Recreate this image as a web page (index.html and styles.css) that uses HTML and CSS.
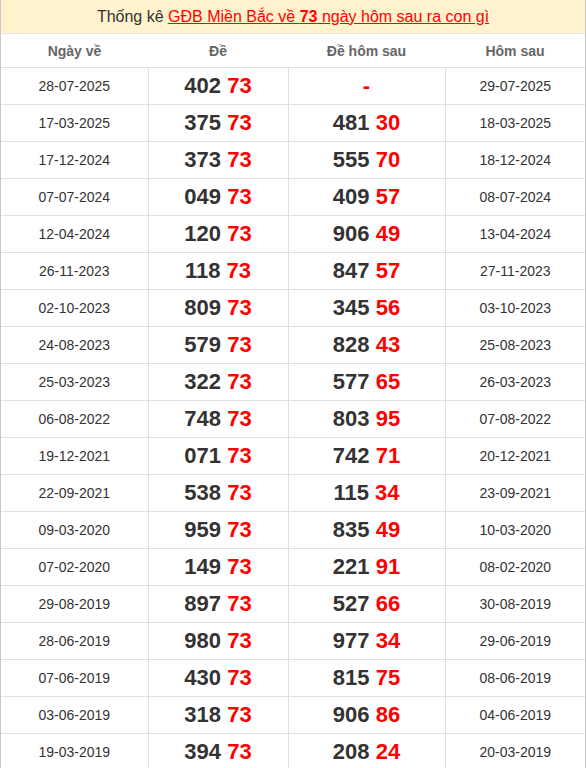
FILE: index.html
```html
<!DOCTYPE html>
<html lang="vi">
<head>
<meta charset="utf-8">
<title>Thống kê GĐB</title>
<link rel="stylesheet" href="styles.css">
</head>
<body>
<div class="wrap">
  <div class="caption">Thống kê <a href="#">GĐB Miền Bắc về <b>73</b> ngày hôm sau ra con gì</a></div>
  <table class="stat">
    <colgroup><col class="c1"><col class="c2"><col class="c3"><col class="c4"></colgroup>
    <thead>
      <tr><th>Ngày về</th><th>Đề</th><th>Đề hôm sau</th><th>Hôm sau</th></tr>
    </thead>
    <tbody>
      <tr><td>28-07-2025</td><td class="num">402 <span>73</span></td><td class="num"><span>-</span></td><td>29-07-2025</td></tr>
      <tr><td>17-03-2025</td><td class="num">375 <span>73</span></td><td class="num">481 <span>30</span></td><td>18-03-2025</td></tr>
      <tr><td>17-12-2024</td><td class="num">373 <span>73</span></td><td class="num">555 <span>70</span></td><td>18-12-2024</td></tr>
      <tr><td>07-07-2024</td><td class="num">049 <span>73</span></td><td class="num">409 <span>57</span></td><td>08-07-2024</td></tr>
      <tr><td>12-04-2024</td><td class="num">120 <span>73</span></td><td class="num">906 <span>49</span></td><td>13-04-2024</td></tr>
      <tr><td>26-11-2023</td><td class="num">118 <span>73</span></td><td class="num">847 <span>57</span></td><td>27-11-2023</td></tr>
      <tr><td>02-10-2023</td><td class="num">809 <span>73</span></td><td class="num">345 <span>56</span></td><td>03-10-2023</td></tr>
      <tr><td>24-08-2023</td><td class="num">579 <span>73</span></td><td class="num">828 <span>43</span></td><td>25-08-2023</td></tr>
      <tr><td>25-03-2023</td><td class="num">322 <span>73</span></td><td class="num">577 <span>65</span></td><td>26-03-2023</td></tr>
      <tr><td>06-08-2022</td><td class="num">748 <span>73</span></td><td class="num">803 <span>95</span></td><td>07-08-2022</td></tr>
      <tr><td>19-12-2021</td><td class="num">071 <span>73</span></td><td class="num">742 <span>71</span></td><td>20-12-2021</td></tr>
      <tr><td>22-09-2021</td><td class="num">538 <span>73</span></td><td class="num">115 <span>34</span></td><td>23-09-2021</td></tr>
      <tr><td>09-03-2020</td><td class="num">959 <span>73</span></td><td class="num">835 <span>49</span></td><td>10-03-2020</td></tr>
      <tr><td>07-02-2020</td><td class="num">149 <span>73</span></td><td class="num">221 <span>91</span></td><td>08-02-2020</td></tr>
      <tr><td>29-08-2019</td><td class="num">897 <span>73</span></td><td class="num">527 <span>66</span></td><td>30-08-2019</td></tr>
      <tr><td>28-06-2019</td><td class="num">980 <span>73</span></td><td class="num">977 <span>34</span></td><td>29-06-2019</td></tr>
      <tr><td>07-06-2019</td><td class="num">430 <span>73</span></td><td class="num">815 <span>75</span></td><td>08-06-2019</td></tr>
      <tr><td>03-06-2019</td><td class="num">318 <span>73</span></td><td class="num">906 <span>86</span></td><td>04-06-2019</td></tr>
      <tr><td>19-03-2019</td><td class="num">394 <span>73</span></td><td class="num">208 <span>24</span></td><td>20-03-2019</td></tr>
    </tbody>
  </table>
</div>
</body>
</html>
```
FILE: styles.css
```css
html, body {
  margin: 0;
  padding: 0;
  background: #fff;
}
body {
  font-family: "Liberation Sans", Arial, sans-serif;
  color: #333;
}
.wrap {
  width: 586px;
  box-sizing: border-box;
  border-left: 1px solid #c8c8c8;
  border-right: 1px solid #c8c8c8;
}
.caption {
  height: 34px;
  line-height: 33px;
  background: #fff2cc;
  text-align: center;
  font-size: 16px;
  color: #333;
  border-bottom: 1px solid #e6e6e6;
  box-sizing: border-box;
}
.caption a {
  color: #f00;
  text-decoration: underline;
}
.caption b {
  font-weight: bold;
}
.stat {
  width: 100%;
  border-collapse: collapse;
  table-layout: fixed;
}
.c1 { width: 147px; }
.c2 { width: 140px; }
.c3 { width: 157px; }
.c4 { width: auto; }
.stat th {
  height: 33px;
  padding: 0;
  font-size: 14px;
  font-weight: bold;
  color: #666;
  text-align: center;
  border-bottom: 1px solid #e0e0e0;
}
.stat td {
  height: 36px;
  padding: 0;
  text-align: center;
  font-size: 14px;
  color: #333;
  border: 1px solid #e0e0e0;
}
.stat td:first-child { border-left: none; }
.stat td:last-child { border-right: none; }
.stat td.num {
  font-size: 22px;
  font-weight: bold;
  color: #333;
}
.stat td.num span {
  color: #f00;
}
```
